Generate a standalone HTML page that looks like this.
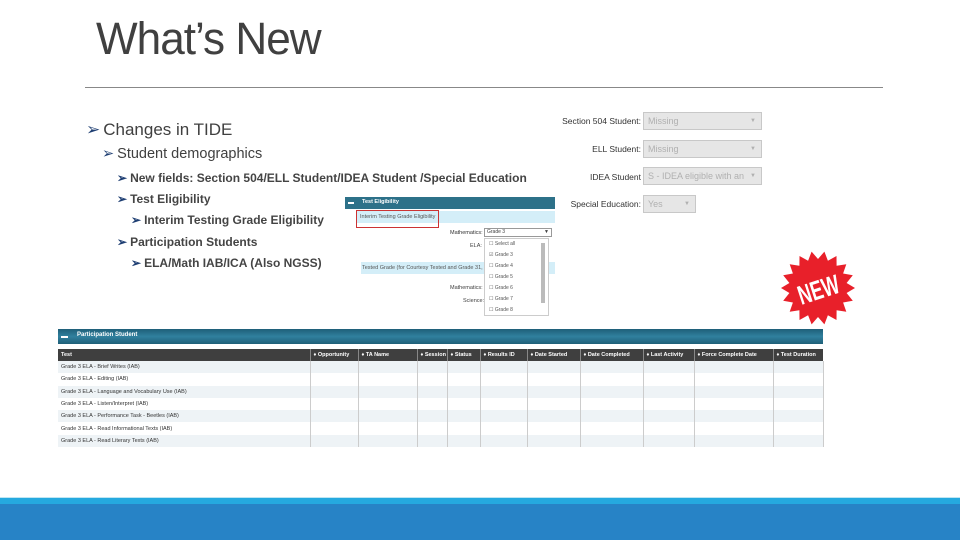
<!DOCTYPE html>
<html><head><meta charset="utf-8"><style>
*{margin:0;padding:0;box-sizing:border-box}
body{width:960px;height:540px;background:#fff;position:relative;overflow:hidden;font-family:"Liberation Sans",sans-serif;color:#404040}
.a{position:absolute}
.t{font-size:10px;white-space:nowrap}
.bul{position:absolute;white-space:nowrap;color:#404040}
.bul:before{content:"➢";color:#1f3f73;margin-right:3px}
.sb{font-size:12px;font-weight:bold;color:#444}
table{border-collapse:collapse;table-layout:fixed}
.tbl{position:absolute;left:58px;top:349px;width:765px;font-size:5.5px}
.tbl th{background:#3f3f3f;color:#fff;text-align:left;font-weight:bold;height:12px;padding-left:3px;border-right:1px solid #888;white-space:nowrap;overflow:hidden}
.tbl td{height:12.3px;padding-left:3px;border-right:1px solid #ccc;color:#333;white-space:nowrap;overflow:hidden}
.tbl tr:nth-child(even) td{background:#eef3f6}
.sel{position:absolute;background:#e6e6e6;border:1px solid #c8c8c8;color:#b0b0b0;font-size:9px;padding:3px 4px;white-space:nowrap;overflow:hidden}
.lab{position:absolute;font-size:8.5px;color:#333;text-align:right;white-space:nowrap}
</style></head><body>
<div class="a" style="left:96px;top:13px;font-size:45px;color:#404040;transform:scaleX(.98);transform-origin:left top;letter-spacing:-1px">What’s New</div>
<div class="a" style="left:85px;top:87px;width:798px;height:1px;background:#888"></div>

<div class="bul" style="left:86px;top:120px;font-size:17px">Changes in TIDE</div>
<div class="bul" style="left:102px;top:146px;font-size:14.5px">Student demographics</div>
<div class="bul sb" style="left:117px;top:171px">New fields: Section 504/ELL Student/IDEA Student /Special Education</div>
<div class="bul sb" style="left:117px;top:192px">Test Eligibility</div>
<div class="bul sb" style="left:131px;top:213px">Interim Testing Grade Eligibility</div>
<div class="bul sb" style="left:117px;top:235px">Participation Students</div>
<div class="bul sb" style="left:131px;top:256px">ELA/Math IAB/ICA (Also NGSS)</div>

<!-- demographics fields -->
<div class="lab" style="right:319px;top:116px">Section 504 Student:</div>
<div class="sel" style="left:643px;top:112px;width:119px;height:18px">Missing<span style="position:absolute;right:5px;font-size:6px;top:5px">▼</span></div>
<div class="lab" style="right:319px;top:144px">ELL Student:</div>
<div class="sel" style="left:643px;top:140px;width:119px;height:18px">Missing<span style="position:absolute;right:5px;font-size:6px;top:5px">▼</span></div>
<div class="lab" style="right:319px;top:172px">IDEA Student</div>
<div class="sel" style="left:643px;top:167px;width:119px;height:18px">S - IDEA eligible with an<span style="position:absolute;right:5px;font-size:6px;top:5px;background:#e6e6e6">▼</span></div>
<div class="lab" style="right:319px;top:199px">Special Education:</div>
<div class="sel" style="left:643px;top:195px;width:53px;height:18px">Yes<span style="position:absolute;right:5px;font-size:6px;top:5px">▼</span></div>

<!-- test eligibility -->
<div class="a" style="left:345px;top:197px;width:210px;height:12px;background:#2d7189"></div>
<div class="a" style="left:348px;top:202px;width:6px;height:1.5px;background:#fff"></div>
<div class="a t" style="left:362px;top:199px;font-size:5.5px;color:#fff;font-weight:bold">Test Eligibility</div>
<div class="a" style="left:356px;top:211px;width:199px;height:12px;background:#d4eef8"></div>
<div class="a" style="left:356px;top:210px;width:83px;height:18px;border:1.3px solid #c33"></div>
<div class="a t" style="left:360px;top:214px;font-size:5.5px;color:#555">Interim Testing Grade Eligibility</div>
<div class="a t" style="left:450px;top:230px;font-size:5.5px;color:#333">Mathematics:</div>
<div class="a" style="left:484px;top:228px;width:68px;height:9px;border:1px solid #999;font-size:5px;padding-left:2px;background:#fff">Grade 3<span style="position:absolute;right:2px">▼</span></div>
<div class="a t" style="left:470px;top:243px;font-size:5.5px">ELA:</div>
<div class="a" style="left:361px;top:262px;width:194px;height:12px;background:#d4eef8"></div>
<div class="a t" style="left:362px;top:265px;font-size:5.5px;color:#555">Tested Grade (for Courtesy Tested and Grade 31, S</div>
<div class="a t" style="left:450px;top:285px;font-size:5.5px">Mathematics:</div>
<div class="a t" style="left:463px;top:298px;font-size:5.5px">Science:</div>
<div class="a" style="left:484px;top:238px;width:65px;height:78px;background:#fff;border:1px solid #ccc;font-size:5px;color:#555;line-height:11px;padding-left:4px">
☐ Select all<br>☑ Grade 3<br>☐ Grade 4<br>☐ Grade 5<br>☐ Grade 6<br>☐ Grade 7<br>☐ Grade 8</div>
<div class="a" style="left:541px;top:243px;width:4px;height:60px;background:#bbb"></div>

<!-- NEW badge -->
<svg class="a" style="left:781px;top:251px" width="74" height="74" viewBox="0 0 74 74">
<polygon fill="#e8202a" points="74,37 65.6,42 71.8,49.7 62.1,51.5 65.3,60.8 55.6,59.2 55.5,69 46.9,64.3 43.4,73.4 37,66 30.6,73.4 27.1,64.3 18.5,69 18.4,59.2 8.7,60.8 11.9,51.5 2.2,49.7 8.4,42 0,37 8.4,32 2.2,24.3 11.9,22.5 8.7,13.2 18.4,14.8 18.5,5 27.1,9.7 30.6,0.6 37,8 43.4,0.6 46.9,9.7 55.5,5 55.6,14.8 65.3,13.2 62.1,22.5 71.8,24.3 65.6,32"/>
<text x="37" y="48" text-anchor="middle" fill="#fff" font-family="Liberation Sans" font-weight="bold" font-size="27" transform="rotate(-18 37 37)" textLength="42" lengthAdjust="spacingAndGlyphs">NEW</text>
</svg>

<!-- participation table -->
<div class="a" style="left:58px;top:329px;width:765px;height:15px;background:linear-gradient(#1f5f78,#30809e 50%,#1f5f78)"></div>
<div class="a" style="left:61px;top:336px;width:7px;height:1.5px;background:#fff"></div>
<div class="a t" style="left:77px;top:332px;font-size:6px;color:#fff;font-weight:bold">Participation Student</div>
<table class="tbl">
<colgroup><col style="width:252px"><col style="width:48px"><col style="width:59px"><col style="width:30px"><col style="width:33px"><col style="width:47px"><col style="width:53px"><col style="width:63px"><col style="width:51px"><col style="width:79px"><col style="width:50px"></colgroup>
<tr><th>Test</th><th>♦ Opportunity</th><th>♦ TA Name</th><th>♦ Session ID</th><th>♦ Status</th><th>♦ Results ID</th><th>♦ Date Started</th><th>♦ Date Completed</th><th>♦ Last Activity</th><th>♦ Force Complete Date</th><th style="border-right:none">♦ Test Duration</th></tr>
<tr><td>Grade 3 ELA - Brief Writes (IAB)</td><td></td><td></td><td></td><td></td><td></td><td></td><td></td><td></td><td></td><td></td></tr>
<tr><td>Grade 3 ELA - Editing (IAB)</td><td></td><td></td><td></td><td></td><td></td><td></td><td></td><td></td><td></td><td></td></tr>
<tr><td>Grade 3 ELA - Language and Vocabulary Use (IAB)</td><td></td><td></td><td></td><td></td><td></td><td></td><td></td><td></td><td></td><td></td></tr>
<tr><td>Grade 3 ELA - Listen/Interpret (IAB)</td><td></td><td></td><td></td><td></td><td></td><td></td><td></td><td></td><td></td><td></td></tr>
<tr><td>Grade 3 ELA - Performance Task - Beetles (IAB)</td><td></td><td></td><td></td><td></td><td></td><td></td><td></td><td></td><td></td><td></td></tr>
<tr><td>Grade 3 ELA - Read Informational Texts (IAB)</td><td></td><td></td><td></td><td></td><td></td><td></td><td></td><td></td><td></td><td></td></tr>
<tr><td>Grade 3 ELA - Read Literary Texts (IAB)</td><td></td><td></td><td></td><td></td><td></td><td></td><td></td><td></td><td></td><td></td></tr>
</table>

<div class="a" style="left:0;top:497px;width:960px;height:1px;background:#bfe6f3"></div>
<div class="a" style="left:0;top:498px;width:960px;height:6px;background:#25a9df"></div>
<div class="a" style="left:0;top:504px;width:960px;height:36px;background:#2783c6"></div>
</body></html>
